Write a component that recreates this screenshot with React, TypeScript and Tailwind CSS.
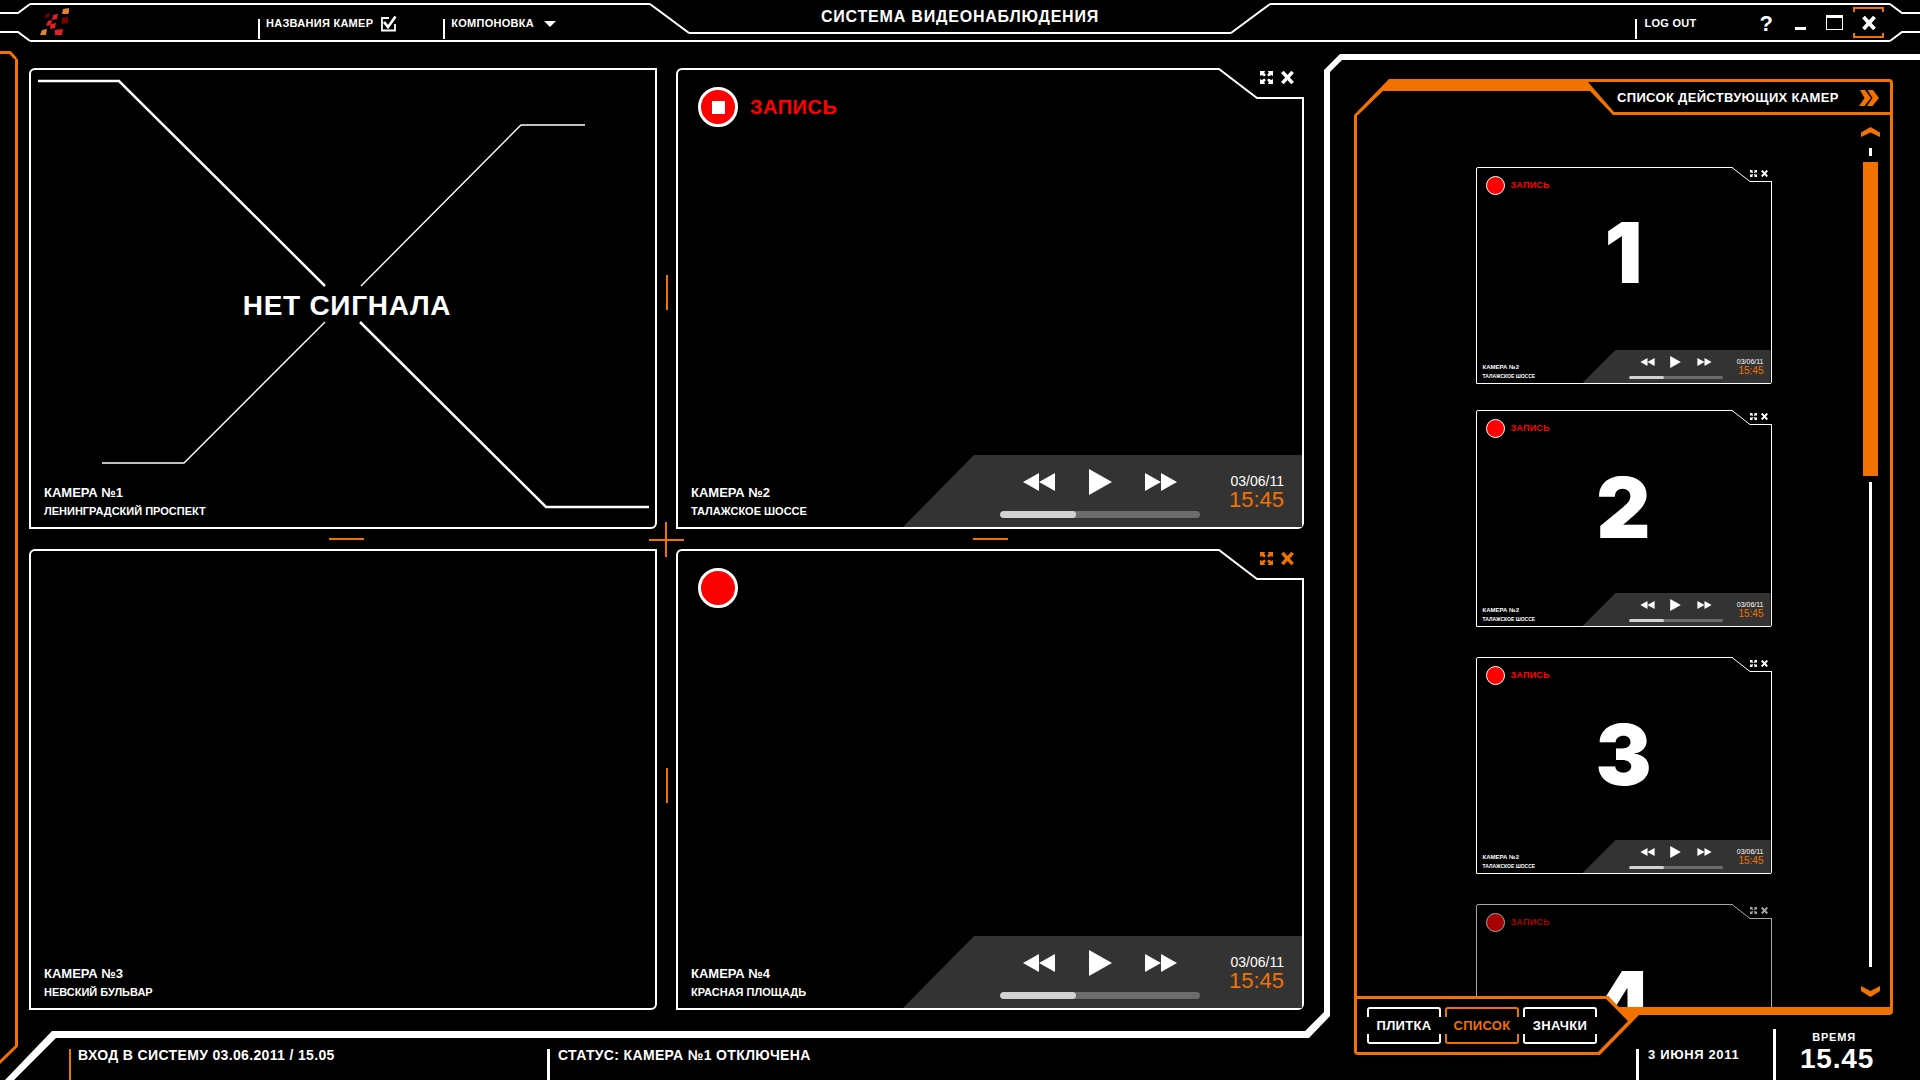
import React from "react";

type Size = "lg" | "sm";

const sizes = {
  lg: {
    frame: "border-2 rounded-tl-md rounded-br-md",
    topRow: "pl-5 pt-[17px] gap-3",
    dot: "size-10 border-3",
    stop: "size-[13px]",
    rec: "text-xl",
    labels: "pl-[13px] pb-2 gap-0.5",
    name: "text-[13px] leading-4",
    street: "text-[11px] leading-4",
    panel:
      "w-[399px] h-[72px] pl-[97px] pr-[18px] [clip-path:polygon(71px_0,100%_0,100%_100%,0_100%)]",
    controls: "w-[200px] pt-3.5 gap-4",
    buttons: "px-[23px] h-[26px]",
    skip: "w-8 h-[18px]",
    play: "w-[23px] h-[26px]",
    track: "h-[7px]",
    stamp: "pt-[18px]",
    date: "text-sm leading-4",
    time: "text-[22px] leading-[22px]",
    notch: "w-[85px] h-[31px]",
    actions: "top-[3px] right-2.5 gap-2",
    icon: "size-[13px]",
    stroke: 2,
  },
  sm: {
    frame: "border rounded-tl-xs rounded-br-xs",
    topRow: "pl-[9px] pt-2 gap-1.5",
    dot: "size-[19px] border",
    stop: "size-1.5",
    rec: "text-[9px]",
    labels: "pl-1.5 pb-[3px] gap-px",
    name: "text-[6px] leading-2",
    street: "text-[5px] leading-2",
    panel:
      "w-[188px] h-[33px] pl-[46px] pr-[7px] [clip-path:polygon(33px_0,100%_0,100%_100%,0_100%)]",
    controls: "w-[94px] pt-1.5 gap-2",
    buttons: "px-[11px] h-3",
    skip: "w-[15px] h-2",
    play: "w-[11px] h-3",
    track: "h-[3px]",
    stamp: "pt-2",
    date: "text-[7px] leading-2",
    time: "text-[10px] leading-[10px]",
    notch: "w-[40px] h-[15px]",
    actions: "top-[3px] right-1 gap-1",
    icon: "size-[7px]",
    stroke: 1,
  },
};

function ExpandIcon({ className }: { className: string }) {
  return (
    <svg viewBox="0 0 14 14" className={className} fill="currentColor" aria-hidden="true">
      <path d="M0 0h5.500L4.500 1.800 6.300 4.300 4.600 6 2 4.300 0 5.500zM14 0v5.500l-2-1.200L9.400 6 7.700 4.300 9.500 1.800 8.500 0zM0 14V8.500l2 1.200L4.600 8l1.700 1.700-1.800 2.500 1 1.800zM14 14H8.500l1-1.800-1.800-2.500L9.400 8 12 9.700l2-1.200z" />
    </svg>
  );
}

function CrossIcon({ className }: { className: string }) {
  return (
    <svg viewBox="0 0 14 14" className={className} fill="none" stroke="currentColor" strokeWidth="3.800" aria-hidden="true">
      <path d="M1.500 1l11 12M12.500 1l-11 12" />
    </svg>
  );
}

function PlayerPanel({ size }: { size: Size }) {
  const s = sizes[size];
  return (
    <div className={`flex shrink-0 justify-between bg-[#333] ${s.panel}`}>
      <div className={`flex flex-col ${s.controls}`}>
        <div className={`flex items-center justify-between ${s.buttons}`}>
          <button aria-label="Назад">
            <svg viewBox="0 0 32 18" className={`block ${s.skip}`} fill="currentColor">
              <path d="M16 0v18L0 9zM32 0v18L16 9z" />
            </svg>
          </button>
          <button aria-label="Воспроизвести">
            <svg viewBox="0 0 23 26" className={`block ${s.play}`} fill="currentColor">
              <path d="M0 0l23 13L0 26z" />
            </svg>
          </button>
          <button aria-label="Вперёд">
            <svg viewBox="0 0 32 18" className={`block ${s.skip}`} fill="currentColor">
              <path d="M0 0l16 9-16 9zM16 0l16 9-16 9z" />
            </svg>
          </button>
        </div>
        <div className={`w-full overflow-hidden rounded-full bg-[#6c6c6c] ${s.track}`}>
          <div className="h-full w-[38%] rounded-full bg-[#d2d2d2]" />
        </div>
      </div>
      <div className={`flex flex-col items-end ${s.stamp}`}>
        <span className={s.date}>03/06/11</span>
        <span className={`text-[#f27200] ${s.time}`}>15:45</span>
      </div>
    </div>
  );
}

interface CameraProps {
  size?: Size;
  name: string;
  street: string;
  live?: boolean;
  recording?: boolean;
  stop?: boolean;
  highlighted?: boolean;
  dim?: boolean;
  children?: React.ReactNode;
}

function Camera({ size = "lg", name, street, live, recording, stop, highlighted, dim, children }: CameraProps) {
  const s = sizes[size];
  const w = size === "lg" ? 85 : 40;
  const h = size === "lg" ? 31 : 15;
  const slant = size === "lg" ? 38 : 18;
  const half = s.stroke / 2;
  return (
    <article
      className={`relative flex size-full flex-col justify-between border-white font-bold ${s.frame} ${dim ? "opacity-65" : ""}`}
    >
      {children}
      <div className={`flex items-center ${s.topRow}`}>
        {live && (
          <button
            aria-label="Запись"
            className={`flex items-center justify-center rounded-full border-white bg-[#f00] ${s.dot}`}
          >
            {stop && <span className={`bg-white ${s.stop}`} />}
          </button>
        )}
        {recording && <span className={`tracking-wide text-[#f00] ${s.rec}`}>ЗАПИСЬ</span>}
      </div>
      {live && (
        <div className={`absolute ${size === "lg" ? "-top-0.5 -right-0.5" : "-top-px -right-px"} ${s.notch}`}>
          <svg viewBox={`0 0 ${w} ${h}`} className="block size-full" fill="none" aria-hidden="true">
            <path d={`M0 0H${w}V${h - s.stroke}H${slant}z`} fill="#000" />
            <path
              d={`M0 ${half}L${slant} ${h - half}H${w}`}
              stroke="#fff"
              strokeWidth={s.stroke}
            />
          </svg>
          <div className={`absolute flex items-center ${s.actions} ${highlighted ? "text-[#f27200]" : ""}`}>
            <button aria-label="Развернуть">
              <ExpandIcon className={`block ${s.icon}`} />
            </button>
            <button aria-label="Закрыть">
              <CrossIcon className={`block ${s.icon}`} />
            </button>
          </div>
        </div>
      )}
      <div className="flex items-end justify-between">
        <div className={`flex flex-col whitespace-nowrap ${s.labels}`}>
          <h2 className={s.name}>{name}</h2>
          <p className={s.street}>{street}</p>
        </div>
        <div className="font-normal">{live && <PlayerPanel size={size} />}</div>
      </div>
    </article>
  );
}

function NoSignal() {
  return (
    <div className="absolute inset-0 flex items-center justify-center">
      <svg viewBox="0 0 624 457" preserveAspectRatio="none" className="absolute inset-0 size-full" fill="none" stroke="#fff" aria-hidden="true">
        <path strokeWidth="2.500" d="M7 11H88L294 216M329 252L515 437H618" />
        <path strokeWidth="1.400" d="M554 55H490L330 216M294 252L153 393H71" />
      </svg>
      <p className="relative pt-3.5 pl-2 text-[28px] leading-8 tracking-wide">НЕТ СИГНАЛА</p>
    </div>
  );
}

function Header() {
  return (
    <header className="flex h-[46px] shrink-0 font-bold">
      <svg viewBox="0 0 30 46" className="w-[30px] shrink-0" fill="none" stroke="#fff" strokeWidth="2" aria-hidden="true">
        <path d="M0 13H18L30 4M0 32H18L30 41" />
      </svg>
      <div className="mt-[3px] mb-1 flex flex-1 border-y-2 border-white">
        <svg viewBox="0 0 29 28" className="mt-[3px] ml-2.5 h-7 w-[29px] shrink-0" aria-hidden="true">
          <path fill="#e0852f" d="M23 1l6-1v4l-1 2h-6zM2 22l5-1-1 6H0z" />
          <path fill="#7d0000" d="M6 6l4-1-1 4-4 1zM22 10l6-1v6l-6 1z" />
          <path fill="#e51f26" d="M13 7l5-1-1 5-5 1zM8 13l4-1-1 5-5 1zM11 16l5-1-1 5-5 1zM15 22l8-1-1 6h-7z" />
        </svg>
        <label className="mt-3.5 ml-[189px] flex h-5 gap-2 border-l-2 border-white pl-1.5 text-[11px] leading-2 tracking-wide whitespace-nowrap">
          НАЗВАНИЯ КАМЕР
          <span className="relative -mt-[3px] size-4">
            <input type="checkbox" defaultChecked className="absolute inset-0 size-full appearance-none" />
            <svg viewBox="0 0 16 16" className="pointer-events-none absolute inset-0 size-full" fill="none" stroke="#fff" aria-hidden="true">
              <path strokeWidth="1.800" d="M8 2H1V14.500H14V8" />
              <path strokeWidth="2.600" d="M3 6l4 5L14.500 .5" />
            </svg>
          </span>
        </label>
        <button className="mt-3.5 ml-[46px] flex h-5 gap-2.5 border-l-2 border-white pl-1.5 text-[11px] leading-2 tracking-wide whitespace-nowrap">
          КОМПОНОВКА
          <svg viewBox="0 0 12 6" className="mt-0.5 h-1.5 w-3" fill="#fff" aria-hidden="true">
            <path d="M0 0h12L6 6z" />
          </svg>
        </button>
      </div>
      <svg viewBox="0 0 39 46" className="w-[39px] shrink-0" fill="none" stroke="#fff" strokeWidth="2" aria-hidden="true">
        <path d="M0 4L39 33M0 41H39" />
      </svg>
      <div className="mb-1 flex w-[542px] flex-col border-b-2 border-white">
        <h1 className="h-[34px] border-b-2 border-white pt-[7px] text-center text-base leading-5 tracking-wider">
          СИСТЕМА ВИДЕОНАБЛЮДЕНИЯ
        </h1>
      </div>
      <svg viewBox="0 0 39 46" className="w-[39px] shrink-0" fill="none" stroke="#fff" strokeWidth="2" aria-hidden="true">
        <path d="M39 4L0 33M0 41H39" />
      </svg>
      <div className="mt-[3px] mb-1 flex flex-1 justify-end border-y-2 border-white">
        <a href="#logout" className="mt-3.5 mr-[63px] h-5 border-l-2 border-white pl-2 text-[11px] leading-2 tracking-wide">
          LOG OUT
        </a>
        <button aria-label="Справка" className="mr-[22px] h-9 pt-[5px] text-[22px] leading-6">
          <span className="block h-7">?</span>
        </button>
        <button aria-label="Свернуть" className="mt-[22px] mr-5 h-[3px] w-[11px] bg-white" />
        <button aria-label="Развернуть окно" className="mt-2.5 mr-2.5 h-[15px] w-[17px] border border-t-3 border-white" />
        <button aria-label="Закрыть окно" className="mt-0.5 mr-1.5 flex h-[31px] w-[31px] flex-col items-center justify-between">
          <span className="h-[5px] w-full border-2 border-b-0 border-[#f27200]" />
          <CrossIcon className="size-3.5" />
          <span className="h-[5px] w-full border-2 border-t-0 border-[#f27200]" />
        </button>
      </div>
      <svg viewBox="0 0 30 46" className="w-[30px] shrink-0" fill="none" stroke="#fff" strokeWidth="2" aria-hidden="true">
        <path d="M30 13H12L0 4M30 32H12L0 41" />
      </svg>
    </header>
  );
}

function Rail() {
  return (
    <div className="-mb-9 flex w-[29px] shrink-0 flex-col pt-[5px] text-[#f27200]" aria-hidden="true">
      <svg viewBox="0 0 18 8" className="h-2 w-[18px]" fill="none" stroke="currentColor" strokeWidth="3">
        <path d="M0 1.500H10L16 8" />
      </svg>
      <div className="ml-[15px] w-[3px] flex-1 bg-current" />
    </div>
  );
}

function CameraWall() {
  return (
    <main className="grid flex-1 grid-cols-[1fr_19px_1fr] grid-rows-[1fr_20px_1fr] pt-[22px] pr-5">
      <Camera name="КАМЕРА №1" street="ЛЕНИНГРАДСКИЙ ПРОСПЕКТ">
        <NoSignal />
      </Camera>
      <div className="flex items-center justify-center pb-3">
        <span className="h-[35px] w-0.5 bg-[#f27200]" />
      </div>
      <Camera name="КАМЕРА №2" street="ТАЛАЖСКОЕ ШОССЕ" live recording stop />
      <div className="flex items-center justify-center pl-1.5">
        <span className="h-0.5 w-[35px] bg-[#f27200]" />
      </div>
      <div className="flex items-center justify-center">
        <svg viewBox="0 0 35 35" className="size-[35px] shrink-0" stroke="#f27200" strokeWidth="2" aria-hidden="true">
          <path d="M0 18H35M17 0V35" />
        </svg>
      </div>
      <div className="flex items-center justify-center">
        <span className="h-0.5 w-[35px] bg-[#f27200]" />
      </div>
      <Camera name="КАМЕРА №3" street="НЕВСКИЙ БУЛЬВАР" />
      <div className="flex items-center justify-center pt-3">
        <span className="h-[35px] w-0.5 bg-[#f27200]" />
      </div>
      <Camera name="КАМЕРА №4" street="КРАСНАЯ ПЛОЩАДЬ" live highlighted />
    </main>
  );
}

function StatusBar() {
  return (
    <footer className="relative flex h-[70px] shrink-0 font-bold">
      <svg viewBox="0 0 56 70" className="w-14 shrink-0" aria-hidden="true">
        <path d="M17 35.500L-1 53" stroke="#f27200" strokeWidth="3" fill="none" />
        <path fill="#fff" d="M52 21H56V28L14 70H5z" />
      </svg>
      <div className="mt-[21px] flex-1 border-t-[7px] border-white">
        <div className="flex pt-[11px] pl-[13px] text-sm tracking-wide">
          <p className="h-[31px] w-[478px] border-l-2 border-[#f27200] pl-[7px] leading-3">
            ВХОД В СИСТЕМУ 03.06.2011 / 15.05
          </p>
          <p className="h-[31px] border-l-3 border-white pl-2 leading-3">СТАТУС: КАМЕРА №1 ОТКЛЮЧЕНА</p>
        </div>
      </div>
      <svg viewBox="0 0 25 70" className="-mr-1.5 w-[25px] shrink-0" aria-hidden="true">
        <path fill="#fff" d="M19 0H25V6L4 28H0V21L19 2z" />
      </svg>
    </footer>
  );
}

const previews = [
  { n: "1", digit: "top-9", gap: "" },
  { n: "2", digit: "top-12", gap: "mt-[26px]" },
  { n: "3", digit: "top-12", gap: "mt-[30px]" },
  { n: "4", digit: "top-12", gap: "mt-[30px]", dim: true },
];

function Preview({ n, digit, gap, dim }: { n: string; digit: string; gap: string; dim?: boolean }) {
  return (
    <li className={`relative h-[217px] w-[296px] shrink-0 ${gap}`}>
      <Camera size="sm" name="КАМЕРА №2" street="ТАЛАЖСКОЕ ШОССЕ" live recording dim={dim} />
      <span className={`absolute inset-x-0 text-center font-[Inter] text-[84px] leading-[100px] font-black ${digit}`}>{n}</span>
    </li>
  );
}

function ViewButton({ label, active }: { label: string; active?: boolean }) {
  return (
    <button
      aria-pressed={!!active}
      className={`flex h-[37px] w-[74px] flex-col justify-between text-[13px] leading-4 tracking-wide ${active ? "text-[#f27200]" : "text-white"}`}
    >
      <span className="h-2.5 w-full rounded-t-[3px] border-2 border-b-0 border-current" />
      <span className="w-full text-center">{label}</span>
      <span className="h-2.5 w-full rounded-b-[3px] border-2 border-t-0 border-current" />
    </button>
  );
}

function Sidebar() {
  return (
    <aside className="flex min-h-0 w-[596px] shrink-0 flex-col pt-2 font-bold">
      <div className="flex h-[18px] shrink-0">
        <svg viewBox="0 0 18 18" className="size-[18px] shrink-0" fill="#fff" aria-hidden="true">
          <path d="M0 18V16L16 0H18V6L6 18z" />
        </svg>
        <div className="h-1.5 flex-1 bg-white" />
      </div>
      <div className="flex min-h-0 flex-1">
        <div className="mb-[68px] w-1.5 bg-white" />
        <div className="flex min-h-0 flex-1 flex-col pt-[7px] pl-6">
          <div className="mr-[27px] flex h-9 shrink-0">
            <svg viewBox="0 0 260 36" className="w-[260px] shrink-0" fill="#f27200" aria-hidden="true">
              <path d="M35 0H260V3H234L260 33V36H259L236 12H29L3 37H0V36z" />
            </svg>
            <div className="flex flex-1 items-center justify-between rounded-tr-sm border-y-3 border-r-3 border-[#f27200] pt-0.5 pr-[11px] pl-[3px]">
              <h2 className="text-[13px] leading-4 tracking-wide whitespace-nowrap">СПИСОК ДЕЙСТВУЮЩИХ КАМЕР</h2>
              <button aria-label="Скрыть список">
                <svg viewBox="0 0 20 16" className="block h-4 w-5" fill="#f27200">
                  <path d="M1 0H6L12 8 5.500 16H0L5.500 8zM8.500 0H14L20 8 13.500 16H8L13.500 8z" />
                </svg>
              </button>
            </div>
          </div>
          <div className="mr-[27px] grid min-h-0 flex-1 grid-cols-[30px_minmax(0,1fr)_30px] rounded-br-sm border-x-3 border-b-8 border-[#f27200]">
            <ul className="col-start-2 flex min-h-0 flex-col items-center overflow-y-auto pt-[52px] [scrollbar-width:none]">
              {previews.map((p) => (
                <Preview key={p.n} {...p} />
              ))}
            </ul>
            <div className="flex min-h-0 flex-col items-center pt-3 pr-2.5 pb-2.5">
              <button aria-label="Вверх">
                <svg viewBox="0 0 19 10" className="block h-2.5 w-[19px]" fill="#f27200">
                  <path d="M0 10V5.500L9.500 0 19 5.500V10L9.500 5.500z" />
                </svg>
              </button>
              <span className="mt-[11px] h-2 w-[3px] bg-white" />
              <span className="mt-1.5 h-[314px] w-[15px] bg-[#f27200]" />
              <span className="mt-1.5 w-[3px] flex-1 bg-white" />
              <button aria-label="Вниз" className="mt-[19px]">
                <svg viewBox="0 0 19 11" className="block h-[11px] w-[19px]" fill="#f27200">
                  <path d="M0 0V5L9.500 11 19 5V0L9.500 5z" />
                </svg>
              </button>
            </div>
          </div>
          <div className="flex h-[65px] shrink-0">
            <nav className="relative -mt-[19px] flex h-[59px] shrink-0" aria-label="Вид">
              <div className="flex gap-1 rounded-bl-sm border-y-3 border-l-3 border-[#f27200] bg-black pt-2 pl-2.5">
                <ViewButton label="ПЛИТКА" />
                <ViewButton label="СПИСОК" active />
                <ViewButton label="ЗНАЧКИ" />
              </div>
              <svg viewBox="0 0 42 59" className="w-[42px] shrink-0" aria-hidden="true">
                <path fill="#000" d="M0 0H11L34 25 2 59H0z" />
                <path fill="#f27200" d="M0 0H11L22 11H42V19L3 59H0V56H1L31 25 9 3H0z" />
              </svg>
            </nav>
            <p className="mt-[34px] -ml-[3px] h-[31px] w-[137px] border-l-3 border-white pl-[9px] text-[13px] leading-3 tracking-wider whitespace-nowrap">
              3 ИЮНЯ 2011
            </p>
            <div className="mt-3.5 flex flex-1 flex-col border-l-3 border-white pr-[22px] text-center tracking-wider">
              <span className="pr-1.5 text-[11px] leading-4">ВРЕМЯ</span>
              <time className="text-[28px] leading-7">15.45</time>
            </div>
          </div>
        </div>
      </div>
    </aside>
  );
}

export default function App() {
  return (
    <div className="flex h-screen flex-col overflow-hidden bg-black font-['Liberation_Sans',Arial,sans-serif] text-white">
      <Header />
      <div className="flex min-h-0 flex-1">
        <div className="flex min-w-0 flex-1 flex-col">
          <div className="flex min-h-0 flex-1">
            <Rail />
            <CameraWall />
          </div>
          <StatusBar />
        </div>
        <Sidebar />
      </div>
    </div>
  );
}
